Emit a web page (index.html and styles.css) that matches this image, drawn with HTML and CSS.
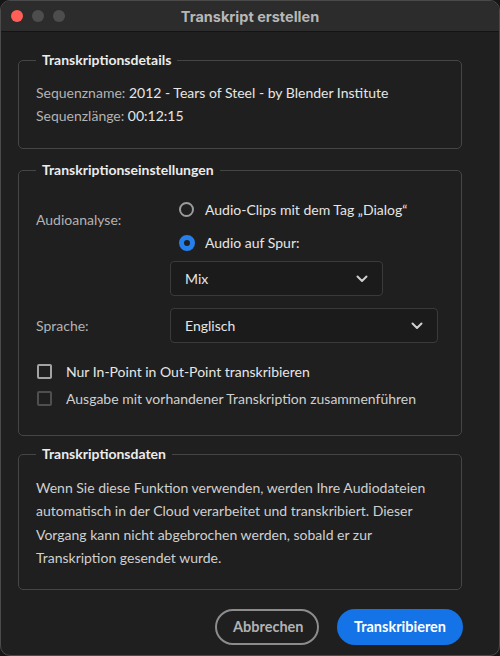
FILE: index.html
```html
<!DOCTYPE html>
<html lang="de">
<head>
<meta charset="utf-8">
<title>Transkript erstellen</title>
<link rel="stylesheet" href="styles.css">
</head>
<body>
<div class="window">
  <div class="titlebar">
    <div class="lights">
      <span class="light red"></span>
      <span class="light grey"></span>
      <span class="light grey"></span>
    </div>
    <div class="title">Transkript erstellen</div>
  </div>
  <div class="content">
    <fieldset class="group g1">
      <legend>Transkriptionsdetails</legend>
      <div class="line"><span class="lbl">Sequenzname:</span> <span class="val">2012 - Tears of Steel - by Blender Institute</span></div>
      <div class="line"><span class="lbl">Sequenzlänge:</span> <span class="val">00:12:15</span></div>
    </fieldset>

    <fieldset class="group g2">
      <legend>Transkriptionseinstellungen</legend>
      <div class="row audio">
        <div class="lbl rowlabel audiolabel">Audioanalyse:</div>
        <div class="options">
          <div class="radio-row"><span class="radio"></span><span class="val">Audio-Clips mit dem Tag „Dialog“</span></div>
          <div class="radio-row"><span class="radio on"></span><span class="val">Audio auf Spur:</span></div>
          <div class="select small"><span>Mix</span><svg class="chev" width="12" height="8" viewBox="0 0 12 8"><path d="M1.5 1.5 L6 6 L10.5 1.5" fill="none" stroke="#cfcfcf" stroke-width="2" stroke-linecap="round" stroke-linejoin="round"/></svg></div>
        </div>
      </div>
      <div class="row lang">
        <div class="lbl rowlabel">Sprache:</div>
        <div class="select wide"><span>Englisch</span><svg class="chev" width="12" height="8" viewBox="0 0 12 8"><path d="M1.5 1.5 L6 6 L10.5 1.5" fill="none" stroke="#cfcfcf" stroke-width="2" stroke-linecap="round" stroke-linejoin="round"/></svg></div>
      </div>
      <div class="checks">
        <div class="check-row"><span class="box"></span><span class="val">Nur In-Point in Out-Point transkribieren</span></div>
        <div class="check-row disabled"><span class="box"></span><span class="val">Ausgabe mit vorhandener Transkription zusammenführen</span></div>
      </div>
    </fieldset>

    <fieldset class="group g3">
      <legend>Transkriptionsdaten</legend>
      <p class="info">Wenn Sie diese Funktion verwenden, werden Ihre Audiodateien automatisch in der Cloud verarbeitet und transkribiert. Dieser Vorgang kann nicht abgebrochen werden, sobald er zur Transkription gesendet wurde.</p>
    </fieldset>

    <div class="buttons">
      <button class="btn secondary">Abbrechen</button>
      <button class="btn primary">Transkribieren</button>
    </div>
  </div>
</div>
</body>
</html>
```

FILE: styles.css
```css
* { box-sizing: border-box; }
html, body {
  margin: 0;
  padding: 0;
  background: #161616;
  width: 500px;
  height: 656px;
  overflow: hidden;
}
.window {
  width: 500px;
  height: 656px;
  background: #1f1f1f;
  border: 1px solid #4a4a4a;
  border-radius: 10px;
  overflow: hidden;
  font-family: Lato, "Open Sans", sans-serif;
  font-size: 14px;
  color: #e4e4e4;
}
.titlebar {
  height: 31px;
  background: #2c2c2c;
  border-bottom: 1px solid #141414;
  display: flex;
  align-items: center;
  position: relative;
}
.lights {
  display: flex;
  gap: 9px;
  padding-left: 10px;
}
.light {
  width: 12px;
  height: 12px;
  border-radius: 50%;
  display: block;
}
.light.red { background: #fe5f57; }
.light.grey { background: #4d4d4d; }
.title {
  position: absolute;
  left: 0;
  right: 0;
  text-align: center;
  font-family: Inter, "Liberation Sans", sans-serif;
  font-weight: 700;
  font-size: 14.5px;
  color: #b7b7b7;
  pointer-events: none;
}
.content {
  padding: 18px 37px 0 17px;
  display: flex;
  flex-direction: column;
}
.group {
  margin: 0;
  border: 1px solid #454545;
  border-radius: 5px;
  padding: 0 17px;
  min-width: 0;
}
.group legend {
  padding: 0 6px;
  font-weight: 700;
  font-size: 14px;
  line-height: 20px;
  color: #ececec;
}
.lbl { color: #b3b3b3; }
.val { color: #e6e6e6; }
.g1 { padding-top: 11px; padding-bottom: 21px; }
.line { line-height: 23px; }
.g2 { margin-top: 11px; padding-top: 13px; padding-bottom: 23px; }
.row { display: grid; grid-template-columns: 134px 1fr; }
.rowlabel { line-height: 20px; align-self: center; }
.audiolabel { align-self: start; margin-top: 17px; }
.options { display: flex; flex-direction: column; }
.radio-row {
  height: 33px;
  display: flex;
  align-items: center;
  padding-left: 9px;
}
.radio {
  width: 15px;
  height: 15px;
  border-radius: 50%;
  border: 2px solid #9b9b9b;
  margin-right: 11px;
  flex: none;
}
.radio.on {
  width: 16px;
  height: 16px;
  margin-left: -0.5px;
  margin-right: 10.5px;
  border: 5.5px solid #2680eb;
  background: #1f1f1f;
}
.select {
  height: 35px;
  border: 1px solid #3a3a3a;
  border-radius: 4px;
  background: #1b1b1b;
  display: flex;
  align-items: center;
  justify-content: space-between;
  padding: 0 14px 0 14px;
  color: #e6e6e6;
}
.select.small { width: 213px; margin-top: 2px; }
.select.wide { width: 268px; }
.lang { margin-top: 12px; }
.checks { margin-top: 15px; display: flex; flex-direction: column; }
.check-row {
  height: 27px;
  display: flex;
  align-items: center;
  padding-left: 1px;
}
.box {
  width: 15px;
  height: 15px;
  border: 2px solid #a3a3a3;
  border-radius: 2px;
  margin-right: 14px;
  flex: none;
}
.check-row.disabled .box { border-color: #4f4f4f; }
.check-row.disabled .val { color: #cfcfcf; }
.g3 { margin-top: 8px; padding-top: 12px; padding-bottom: 19px; }
.info {
  margin: 0;
  line-height: 23.4px;
  color: #d0d0d0;
}
.buttons {
  display: flex;
  justify-content: flex-end;
  gap: 18px;
  margin-top: 19px;
  margin-right: -1px;
}
.btn {
  height: 36px;
  border-radius: 18px;
  font-family: Lato, "Open Sans", sans-serif;
  font-weight: 700;
  font-size: 14.5px;
  padding: 0 16px;
  cursor: pointer;
}
.btn.secondary {
  width: 104px;
  background: transparent;
  border: 2px solid #8c8c8c;
  color: #b2b2b2;
}
.btn.primary {
  width: 126px;
  background: #1473e6;
  border: none;
  color: #ffffff;
}
```
